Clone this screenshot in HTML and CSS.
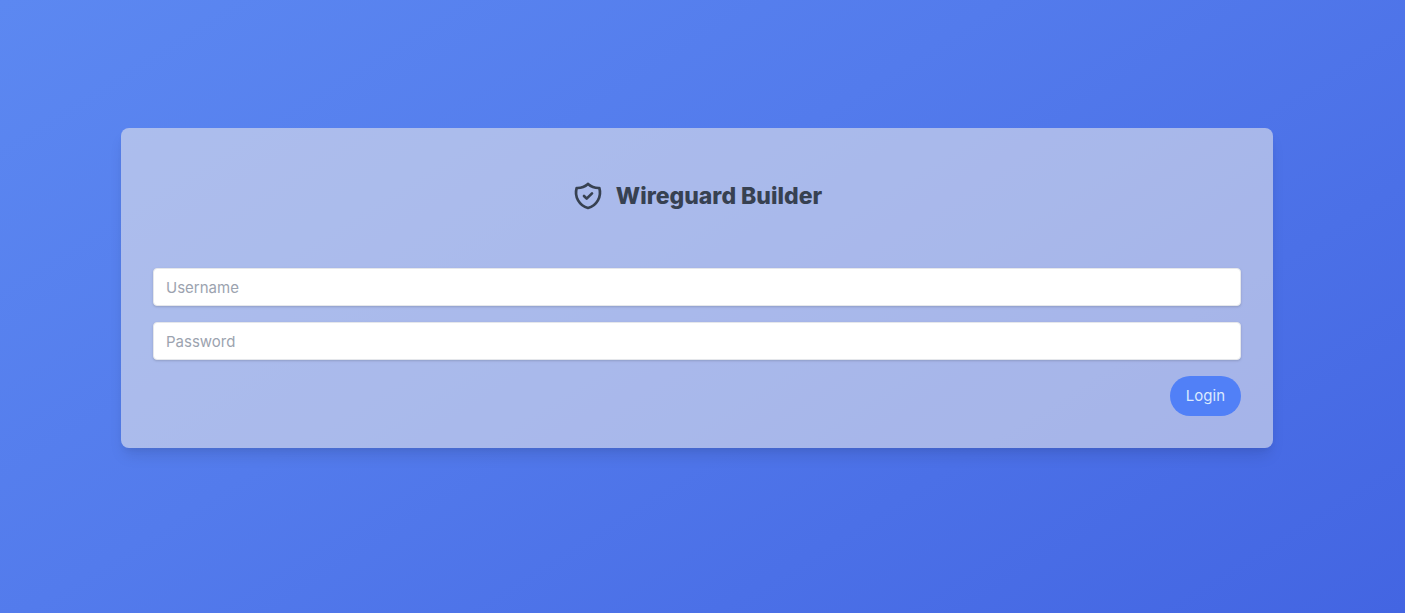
FILE: index.html
```html
<!DOCTYPE html>
<html lang="en">
<head>
<meta charset="utf-8">
<meta name="viewport" content="width=device-width, initial-scale=1">
<title>Wireguard Builder</title>
<link rel="stylesheet" href="styles.css">
</head>
<body>
<main class="page">
  <section class="card">
    <header class="brand">
      <svg class="brand-icon" viewBox="0 0 24 24" fill="none" stroke="currentColor" stroke-width="2" stroke-linecap="round" stroke-linejoin="round" aria-hidden="true"><path d="M9 12l2 2 4-4"/><path d="M12 3a12 12 0 0 0 8.500 3A12 12 0 0 1 12 21 12 12 0 0 1 3.500 6 12 12 0 0 0 12 3"/></svg>
      <h1 class="brand-title">Wireguard Builder</h1>
    </header>
    <form class="login-form">
      <input class="field" type="text" name="username" placeholder="Username" aria-label="Username">
      <input class="field" type="password" name="password" placeholder="Password" aria-label="Password">
      <button class="login-button" type="submit">Login</button>
    </form>
  </section>
</main>
</body>
</html>
```
FILE: styles.css
```css
* { box-sizing: border-box; }

body {
  margin: 0;
  font-family: Inter, "Liberation Sans", sans-serif;
  font-size: 15px;
  line-height: 24px;
  color: #374151;
}

.page {
  min-height: 100vh;
  padding: 128px 132px 128px 121px;
  background: linear-gradient(148deg, #5c88f1, #537bec 42%, #4365e2);
}

.card {
  padding: 32px;
  border-radius: 8px;
  background: rgba(229, 229, 235, 0.6);
  box-shadow: 0 10px 15px -3px rgba(0, 0, 0, 0.1), 0 4px 6px -2px rgba(0, 0, 0, 0.05);
}

.brand {
  display: flex;
  align-items: center;
  justify-content: center;
  gap: 12px;
  padding: 20px 0;
  margin-bottom: 36px;
}

.brand-icon { width: 32px; height: 32px; }

.brand-title {
  margin: 0;
  font-size: 23px;
  line-height: 32px;
  font-weight: 800;
}

.login-form {
  display: flex;
  flex-direction: column;
  gap: 16px;
}

.field {
  width: 100%;
  height: 38px;
  padding: 8px 12px;
  border: 1px solid #e5e7eb;
  border-radius: 4px;
  background: #fff;
  box-shadow: 0 1px 3px rgba(0, 0, 0, 0.1), 0 1px 2px rgba(0, 0, 0, 0.06);
  font: inherit;
  color: inherit;
}

.field::placeholder { color: #9ca3af; }

.login-button {
  align-self: flex-end;
  padding: 8px 16px;
  border: 0;
  border-radius: 20px;
  background: #5180f7;
  color: #dbeafe;
  font: inherit;
}
```
